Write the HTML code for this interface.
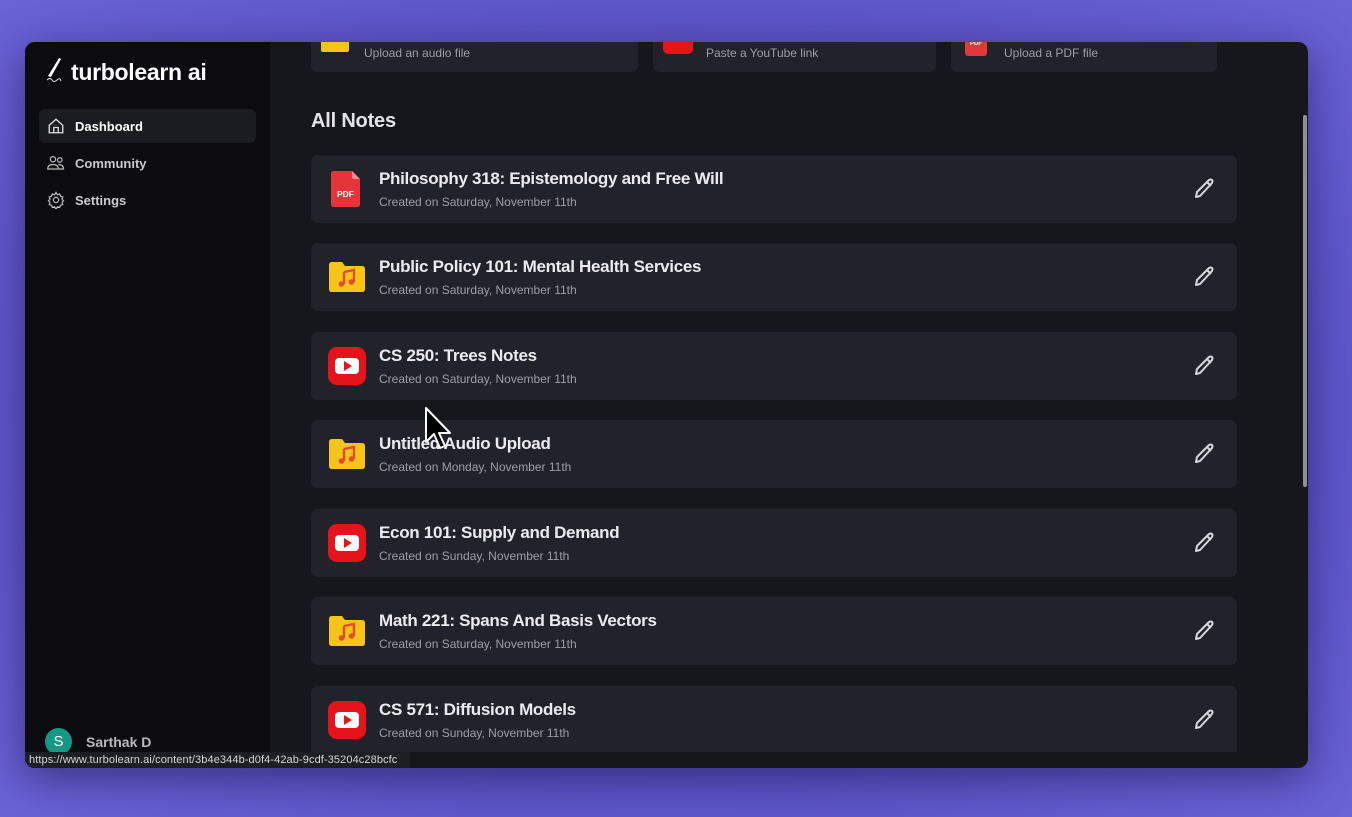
<!DOCTYPE html>
<html><head><meta charset="utf-8"><style>
*{box-sizing:border-box;margin:0;padding:0}
body{width:1352px;height:817px;overflow:hidden;background:radial-gradient(ellipse at 50% 50%,#4a3fae 0%,#5952c4 60%,#6a63d6 100%);font-family:"Liberation Sans",sans-serif;position:relative}
.win{position:absolute;left:25px;top:42px;width:1283px;height:726px;border-radius:10px;overflow:hidden;background:#16171d;box-shadow:0 10px 40px rgba(20,10,60,.5)}
.side{position:absolute;left:0;top:0;width:245px;height:726px;background:#0c0c10}
.logo{position:absolute;left:20px;top:14px;color:#fff;font-size:23px;font-weight:bold;letter-spacing:-.3px}
.nav{position:absolute;left:14px;width:217px;height:34px;border-radius:6px;color:#c9cad0;font-size:13px;font-weight:bold;padding:10px 0 0 36px}
.nav svg{position:absolute;left:8px;top:8px}
.card{position:absolute;left:286px;width:926px;height:68px;background:#22232a;border-radius:7px}
.card .t{position:absolute;left:68px;top:14px;color:#ececf0;font-size:17px;font-weight:bold;letter-spacing:-.3px}
.card .s{position:absolute;left:68px;top:40px;color:#9d9ea6;font-size:12px}
.card .ic{position:absolute;left:18px;top:16px}
.card .pen{position:absolute;left:881px;top:22px}
.up{position:absolute;top:-10px;height:40px;background:#22232a;border-radius:7px;color:#9d9ea6;font-size:12px}
.up span{position:absolute;top:14px}
</style></head><body>
<div class="win">
 <div class="side">
  <div class="logo"><svg width="22" height="28" viewBox="0 0 22 28" style="vertical-align:-4px;margin-right:4px"><path d="M3 20 L14 2 L16 3 L6 21 Z" fill="#fff"/><path d="M2 24 q3 -3 5 0 t5 0 t4 1" stroke="#ddd" stroke-width="1" fill="none"/></svg>turbolearn ai</div>
  <div class="nav" style="top:67px;background:#1b1c22;color:#fff"><svg width="18" height="18" viewBox="0 0 24 24" fill="none" stroke="#ddd" stroke-width="1.8"><path d="M3 11 L12 3 L21 11 V21 H3 Z M9 21 V14 H15 V21"/></svg>Dashboard</div>
  <div class="nav" style="top:104px"><svg width="18" height="18" viewBox="0 0 24 24" fill="none" stroke="#bbb" stroke-width="1.6"><circle cx="8" cy="7" r="3.5"/><circle cx="17" cy="8" r="3"/><path d="M1 20 q0-6 7-6 q7 0 7 6 Z M15 14 q7 0 7 6 h-6"/></svg>Community</div>
  <div class="nav" style="top:141px"><svg width="18" height="18" viewBox="0 0 24 24" fill="none" stroke="#bbb" stroke-width="1.6"><circle cx="12" cy="12" r="3.5"/><path d="M12 2 l2 3 3-1 1 3 3 1-1 3 2 2-2 2 1 3-3 1-1 3-3-1-2 3-2-3-3 1-1-3-3-1 1-3-2-2 2-2-1-3 3-1 1-3 3 1z"/></svg>Settings</div>
  <div style="position:absolute;left:20px;top:686px;width:27px;height:27px;border-radius:50%;background:#149a84;color:#fff;font-size:15px;text-align:center;line-height:27px">S</div>
  <div style="position:absolute;left:61px;top:692px;color:#b9bac0;font-size:14px;font-weight:bold">Sarthak D</div>
 </div>
 <div class="up" style="left:286px;width:327px"><div style="position:absolute;left:10px;top:8px;width:28px;height:12px;background:#f6c21c;border-radius:2px"></div><span style="left:53px">Upload an audio file</span></div>
 <div class="up" style="left:628px;width:283px"><div style="position:absolute;left:10px;top:6px;width:30px;height:16px;background:#e5131b;border-radius:5px"></div><span style="left:53px">Paste a YouTube link</span></div>
 <div class="up" style="left:926px;width:266px"><div style="position:absolute;left:14px;top:6px;width:22px;height:18px;background:#e2383c;border-radius:3px;color:#fff;font-size:6px;font-weight:bold;text-align:center;line-height:12px">PDF</div><span style="left:53px">Upload a PDF file</span></div>
 <div style="position:absolute;left:286px;top:68px;color:#e4e4e8;font-size:20px;font-weight:bold;letter-spacing:-.2px">All Notes</div>
 <div style="position:absolute;left:1278px;top:73px;width:4px;height:372px;background:#8f9096;border-radius:2px"></div>
 <div style="position:absolute;left:0;top:710px;width:385px;height:16px;background:#1e1f24;color:#d6d6da;font-size:11px;padding:2px 0 0 4px;letter-spacing:.1px;white-space:nowrap">https://www.turbolearn.ai/content/3b4e344b-d0f4-42ab-9cdf-35204c28bcfc</div>
</div>
<svg width="0" height="0" style="position:absolute"><defs>
<symbol id="pdf" viewBox="0 0 36 36"><path d="M5 0 H23 L31 8 V33 q0 3 -3 3 H5 q-3 0 -3-3 V3 q0-3 3-3z" fill="#e5343a"/><path d="M23 0 V6 q0 2 2 2 H31z" fill="#f18a8c"/><text x="16.5" y="26" font-family="Liberation Sans" font-size="8.5" font-weight="bold" fill="#fff" text-anchor="middle">PDF</text></symbol>
<symbol id="aud" viewBox="0 0 36 36"><path d="M0 6 q0-3 3-3 H13 L16 7 H33 q3 0 3 3 V30 q0 3-3 3 H3 q-3 0-3-3z" fill="#f7c419"/><path d="M15 13 L25 11 V23 M15 13 V25" stroke="#e24b2b" stroke-width="2.4" fill="none"/><circle cx="12.5" cy="25" r="2.8" fill="#e24b2b"/><circle cx="22.5" cy="23" r="2.8" fill="#e24b2b"/></symbol>
<symbol id="yt" viewBox="0 0 38 38"><rect x="0" y="0" width="38" height="38" rx="9" fill="#e5131b"/><rect x="7" y="11" width="24" height="16" rx="4" fill="#fff"/><path d="M16 14 L24 19 L16 24z" fill="#e5131b"/></symbol>
<symbol id="pen" viewBox="0 0 24 24"><path d="M4 20 L5 15 L17 3 q2-1 3 0 q1 1 0 3 L8 19 Z M15 5 L19 9" stroke="#d8d8dc" stroke-width="2" fill="none" stroke-linejoin="round"/></symbol>
</defs></svg>
<div style="position:absolute;left:25px;top:42px">
 <div class="card" style="top:113px"><svg class="ic" width="36" height="36"><use href="#pdf"/></svg><div class="t">Philosophy 318: Epistemology and Free Will</div><div class="s">Created on Saturday, November 11th</div><svg class="pen" width="24" height="24"><use href="#pen"/></svg></div>
 <div class="card" style="top:201px"><svg class="ic" width="36" height="36" style="left:18px"><use href="#aud"/></svg><div class="t">Public Policy 101: Mental Health Services</div><div class="s">Created on Saturday, November 11th</div><svg class="pen" width="24" height="24"><use href="#pen"/></svg></div>
 <div class="card" style="top:290px"><svg class="ic" width="38" height="38" style="top:15px;left:17px"><use href="#yt"/></svg><div class="t">CS 250: Trees Notes</div><div class="s">Created on Saturday, November 11th</div><svg class="pen" width="24" height="24"><use href="#pen"/></svg></div>
 <div class="card" style="top:378px"><svg class="ic" width="36" height="36"><use href="#aud"/></svg><div class="t">Untitled Audio Upload</div><div class="s">Created on Monday, November 11th</div><svg class="pen" width="24" height="24"><use href="#pen"/></svg></div>
 <div class="card" style="top:467px"><svg class="ic" width="38" height="38" style="top:15px;left:17px"><use href="#yt"/></svg><div class="t">Econ 101: Supply and Demand</div><div class="s">Created on Sunday, November 11th</div><svg class="pen" width="24" height="24"><use href="#pen"/></svg></div>
 <div class="card" style="top:555px"><svg class="ic" width="36" height="36"><use href="#aud"/></svg><div class="t">Math 221: Spans And Basis Vectors</div><div class="s">Created on Saturday, November 11th</div><svg class="pen" width="24" height="24"><use href="#pen"/></svg></div>
 <div class="card" style="top:644px;height:66px;border-radius:7px 7px 0 0"><svg class="ic" width="38" height="38" style="top:15px;left:17px"><use href="#yt"/></svg><div class="t">CS 571: Diffusion Models</div><div class="s">Created on Sunday, November 11th</div><svg class="pen" width="24" height="24"><use href="#pen"/></svg></div>
</div>
<svg style="position:absolute;left:424px;top:406px" width="30" height="46" viewBox="0 0 30 46"><path d="M2 2 V36 L10 28 L16 42 L21 40 L15 27 H26 Z" fill="#000" stroke="#fff" stroke-width="2" stroke-linejoin="round"/></svg>
</body></html>
